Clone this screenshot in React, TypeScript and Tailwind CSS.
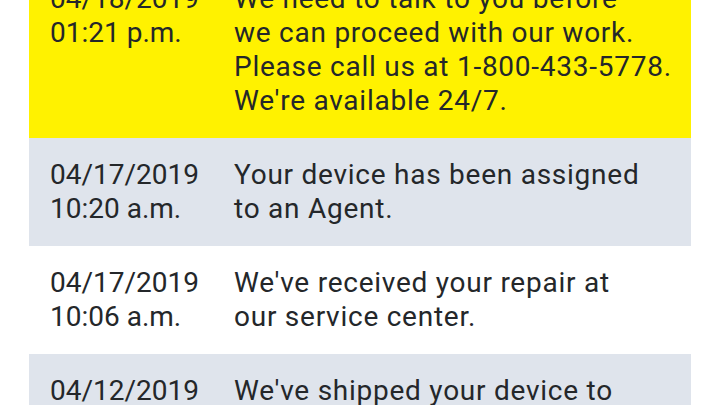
import React from "react";

const rows = [
  {
    date: "04/18/2019",
    time: "01:21 p.m.",
    lines: ["We need to talk to you before", "we can proceed with our work.", "Please call us at 1-800-433-5778.", "We're available 24/7."],
    bg: "bg-[#fff200]",
  },
  {
    date: "04/17/2019",
    time: "10:20 a.m.",
    lines: ["Your device has been assigned", "to an Agent."],
    bg: "bg-[#dfe4ec]",
  },
  {
    date: "04/17/2019",
    time: "10:06 a.m.",
    lines: ["We've received your repair at", "our service center."],
    bg: "bg-white",
  },
  {
    date: "04/12/2019",
    time: "",
    lines: ["We've shipped your device to", "us."],
    bg: "bg-[#dfe4ec]",
  },
];

export default function App() {
  return (
    <div
      className="w-[720px] h-[405px] overflow-hidden bg-white"
      style={{ fontFamily: "Roboto, 'Liberation Sans', sans-serif" }}
    >
      <div className="-mt-[38px] mx-[29px] flex flex-col text-[28px] leading-[34px] text-[#24272a]">
        {rows.map((r, i) => (
          <div key={i} className={`flex py-5 pl-[21px] ${r.bg}`}>
            <div className="w-[184px] shrink-0 flex flex-col">
              <span>{r.date}</span>
              {r.time && <span>{r.time}</span>}
            </div>
            <div className="flex flex-col tracking-[0.75px]">
              {r.lines.map((l, j) => (
                <span key={j} className="whitespace-nowrap">{l}</span>
              ))}
            </div>
          </div>
        ))}
      </div>
    </div>
  );
}
